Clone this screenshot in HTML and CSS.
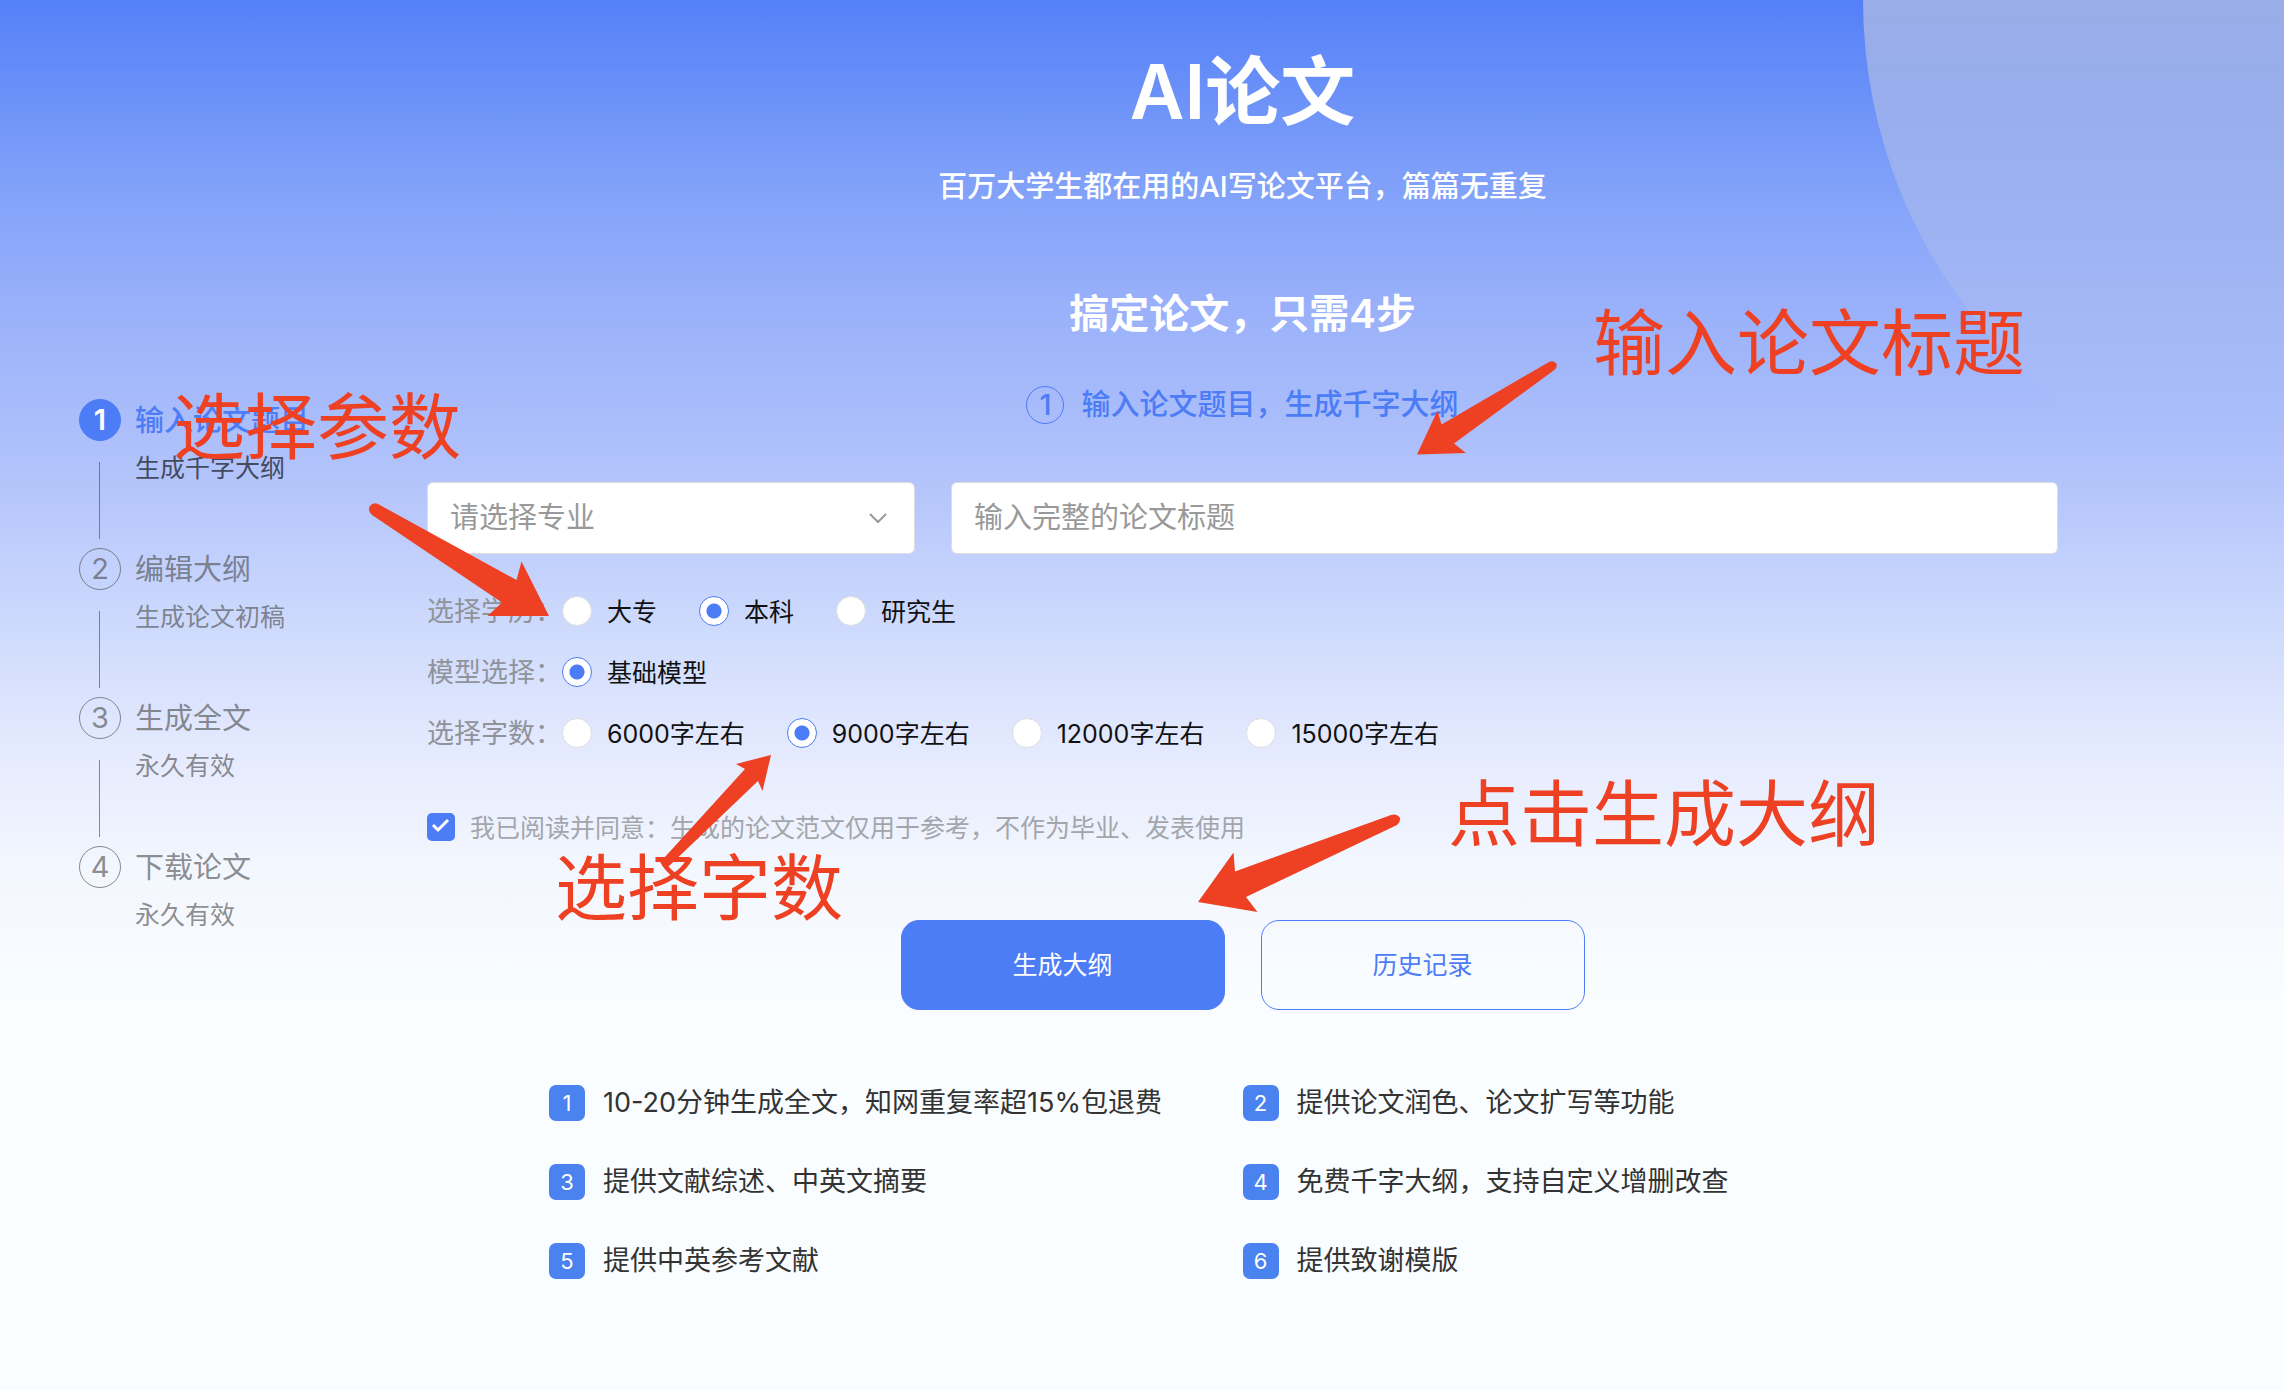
FILE: index.html
```html
<!DOCTYPE html>
<html lang="zh-CN">
<head>
  <meta charset="UTF-8">
  <title>AI论文</title>
  <link rel="stylesheet" href="styles.css">
</head>
<body>
  <div class="page">
    <div class="deco"></div>

    <aside class="sidebar">
      <ol class="steps">
        <li class="step active">
          <span class="step-num">1</span>
          <div class="step-text"><b>输入论文题目</b><span>生成千字大纲</span></div>
        </li>
        <li class="step">
          <span class="step-num">2</span>
          <div class="step-text"><b>编辑大纲</b><span>生成论文初稿</span></div>
        </li>
        <li class="step">
          <span class="step-num">3</span>
          <div class="step-text"><b>生成全文</b><span>永久有效</span></div>
        </li>
        <li class="step">
          <span class="step-num">4</span>
          <div class="step-text"><b>下载论文</b><span>永久有效</span></div>
        </li>
      </ol>
    </aside>

    <main class="main">
      <h1>AI论文</h1>
      <p class="subtitle">百万大学生都在用的AI写论文平台，篇篇无重复</p>
      <h2>搞定论文，只需4步</h2>
      <h3 class="current"><span class="current-num">1</span>输入论文题目，生成千字大纲</h3>

      <form class="form">
        <div class="fields">
          <div class="select-wrap">
            <select class="field" aria-label="专业">
              <option>请选择专业</option>
            </select>
            <svg class="chevron" viewBox="0 0 20 12"><path d="M2 2l8 8 8-8" fill="none" stroke="#999" stroke-width="2"/></svg>
          </div>
          <input class="field" type="text" aria-label="论文标题" placeholder="输入完整的论文标题">
        </div>

        <div class="row" role="radiogroup" aria-labelledby="degree">
          <span class="row-label" id="degree">选择学历：</span>
          <label><input type="radio" name="degree">大专</label>
          <label><input type="radio" name="degree" checked>本科</label>
          <label><input type="radio" name="degree">研究生</label>
        </div>
        <div class="row" role="radiogroup" aria-labelledby="model">
          <span class="row-label" id="model">模型选择：</span>
          <label><input type="radio" name="model" checked>基础模型</label>
        </div>
        <div class="row" role="radiogroup" aria-labelledby="words">
          <span class="row-label" id="words">选择字数：</span>
          <label><input type="radio" name="words">6000字左右</label>
          <label><input type="radio" name="words" checked>9000字左右</label>
          <label><input type="radio" name="words">12000字左右</label>
          <label><input type="radio" name="words">15000字左右</label>
        </div>

        <label class="agree">
          <span class="check-wrap">
            <input type="checkbox" checked>
            <svg viewBox="0 0 28 28"><path d="M6 12l5 5 10-10" fill="none" stroke="#fff" stroke-width="3"/></svg>
          </span>
          我已阅读并同意：生成的论文范文仅用于参考，不作为毕业、发表使用
        </label>

        <div class="buttons">
          <button type="button" class="btn primary">生成大纲</button>
          <button type="button" class="btn">历史记录</button>
        </div>
      </form>

      <ul class="features">
        <li><span>1</span>10-20分钟生成全文，知网重复率超15%包退费</li>
        <li><span>2</span>提供论文润色、论文扩写等功能</li>
        <li><span>3</span>提供文献综述、中英文摘要</li>
        <li><span>4</span>免费千字大纲，支持自定义增删改查</li>
        <li><span>5</span>提供中英参考文献</li>
        <li><span>6</span>提供致谢模版</li>
      </ul>
    </main>

    <!-- guide notes over the page -->
    <div class="note note-params">选择参数</div>
    <div class="note note-title">输入论文标题</div>
    <div class="note note-words">选择字数</div>
    <div class="note note-submit">点击生成大纲</div>
    <svg class="arrows" width="2284" height="1390" viewBox="0 0 2284 1390">
      <path d="M378 504L516.500 580L521.500 561.500L549 616H487.500L502 602.500L372 515Q367 510 370 506Q373 502 378 504Z"/>
      <path d="M1549 362L1441.500 424.500L1437.500 410.500L1417 454.500L1466 453L1454 443.500L1555 369.500Q1558 366 1556 363Q1553 360 1549 362Z"/>
      <path d="M771 755L736 764L745 769L664 858L662 866L668 867L758 781L762.500 791Z"/>
      <path d="M1391 815L1235 871.500L1233.500 852.500L1198 902L1257.500 912L1246 897L1397 825Q1401 821 1400 818Q1397 813 1391 815Z"/>
    </svg>
  </div>
</body>
</html>
```
FILE: styles.css
```css
* { box-sizing: border-box; }
body { margin: 0; font-family: Inter, "Noto Sans CJK SC", sans-serif; font-size: 25px; background: #fafdff; }
h1, h2, h3, p, ul, ol { margin: 0; padding: 0; }
li { list-style: none; }

.page {
  position: relative;
  display: flex;
  min-height: 100vh;
  overflow: hidden;
  background: linear-gradient(#5480f8 0, #7b9df9 160px, #98b0fa 300px, #b3c4fb 480px, #d0dcfd 640px, #e6ebfe 760px, #f2f6fe 860px, #fafdff 1000px);
}
.deco {
  position: absolute;
  top: -510px;
  left: 1863px;
  width: 1020px;
  height: 1020px;
  border-radius: 50%;
  background: linear-gradient(rgba(222, 218, 216, .5) 50%, rgba(222, 218, 216, 0) 92%);
}

/* left steps */
.sidebar { flex: none; width: 427px; padding: 399px 0 0 79px; position: relative; }
.step { position: relative; display: flex; gap: 14px; height: 149px; color: rgba(80, 80, 80, .65); }
.step::after { content: ""; position: absolute; left: 20px; top: 63px; width: 1px; height: 77px; background: currentColor; }
.step:last-child::after { display: none; }
.step-num { width: 42px; height: 42px; border: 1px solid currentColor; border-radius: 50%; font-size: 29px; line-height: 40px; text-align: center; }
.step-text { display: flex; flex-direction: column; gap: 5px; padding-top: 1px; }
.step-text b { font-size: 29px; line-height: 42px; font-weight: 400; }
.step-text span { line-height: 42px; }
.active .step-num { background: #4d7cf7; border-color: #4d7cf7; color: #fff; font-weight: 600; }
.active .step-text b { color: #4d7cf7; font-weight: 500; }
.active .step-text span { color: #444b5e; }

/* main column */
.main { flex: 1; margin-right: 226px; padding-top: 37px; position: relative; }
h1, h2, .subtitle { color: #fff; text-align: center; }
h1 { font-size: 75px; line-height: 110px; font-weight: 600; }
.subtitle { margin-top: 20px; font-size: 29px; line-height: 40px; font-weight: 500; }
h2 { margin-top: 77px; font-size: 40px; line-height: 60px; font-weight: 600; }
.current { display: flex; justify-content: center; align-items: center; gap: 17px; margin-top: 42px; height: 38px; line-height: 36px; color: #4d7cf7; font-size: 29px; font-weight: 500; }
.current-num { width: 38px; height: 38px; border: 1px solid #4d7cf7; border-radius: 50%; text-align: center; }

.fields { display: grid; grid-template-columns: 488px 1fr; gap: 36px; margin: 58px 0 25px; }
.select-wrap { position: relative; }
.field { width: 100%; height: 72px; padding: 0 22px 2px; border: 1px solid #ddd; border-radius: 6px; background: #fff; color: #999; font: inherit; font-size: 29px; appearance: none; }
.field::placeholder { color: #999; opacity: 1; }
.chevron { position: absolute; right: 27px; top: 30px; width: 20px; height: 12px; }

.row { display: flex; align-items: center; height: 61px; }
.row-label { font-size: 27px; color: #909399; }
.row label { display: flex; align-items: center; gap: 15px; margin-right: 42px; color: #111; }
.row input { appearance: none; margin: 2px 0 0; width: 30px; height: 30px; border: 1px solid #ddd; border-radius: 50%; background: #fff; }
.row input:checked { border-color: #4d7cf7; background: radial-gradient(circle, #4d7cf7 7px, #fff 8px); }

.agree { display: flex; align-items: center; gap: 15px; margin-top: 45px; height: 38px; color: #a3a5ab; }
.check-wrap { position: relative; margin-top: 2px; width: 28px; height: 28px; }
.check-wrap input { appearance: none; display: block; margin: 0; width: 28px; height: 28px; border-radius: 5px; background: #4d7cf7; }
.check-wrap svg { position: absolute; left: 0; top: 0; width: 28px; height: 28px; }

.buttons { display: flex; justify-content: center; gap: 36px; margin-top: 75px; }
.btn { width: 324px; height: 90px; padding: 0 0 4px; border: 1px solid #4d7cf7; border-radius: 18px; background: transparent; color: #4d7cf7; font: inherit; }
.btn.primary { background: #4d7cf7; color: #fff; }

.features { display: grid; grid-template-columns: 1fr 1fr; row-gap: 43px; margin-top: 75px; padding: 0 122px; font-size: 27px; line-height: 36px; color: #333; }
.features li { display: flex; gap: 18px; }
.features span { width: 36px; height: 36px; border-radius: 7px; background: #4a82f0; color: #fff; font-size: 22px; text-align: center; }

/* red notes */
.note { position: absolute; color: #ee4023; font-size: 72px; line-height: 72px; white-space: nowrap; }
.note-params { left: 173px; top: 391px; }
.note-title { left: 1593px; top: 307px; }
.note-words { left: 555px; top: 852px; }
.note-submit { left: 1448px; top: 778px; }
.arrows { position: absolute; left: 0; top: 0; fill: #ee4023; pointer-events: none; }
```
